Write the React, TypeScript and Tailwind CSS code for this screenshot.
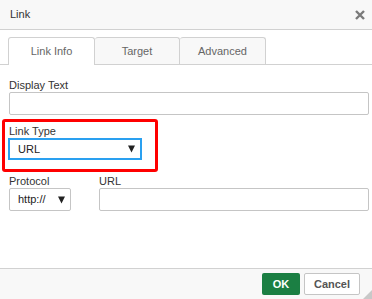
const TABS = [
  { label: "Link Info", w: "w-[87px]", active: true },
  { label: "Target", w: "w-[85px]", active: false },
  { label: "Advanced", w: "w-[86px]", active: false },
];

function Arrow() {
  return (
    <svg width="7" height="8" viewBox="0 0 7 8">
      <path d="M0 0.5 L7 0.5 L3.5 7.5 Z" fill="#222" />
    </svg>
  );
}

export default function App() {
  return (
    <div className="flex h-[299px] w-[372px] flex-col overflow-hidden bg-white text-[11px] text-[#333]" style={{ fontFamily: '"Liberation Sans", Arial, sans-serif' }}>
      <div className="flex h-[30px] shrink-0 items-center justify-between border-b border-[#d1d1d1] bg-[#f8f8f8] pl-[10px] pr-[7px]">
        <span className="text-[11px] text-[#333]">Link</span>
        <svg width="10" height="10" viewBox="0 0 10 10" className="mt-[1px]">
          <path d="M1 1 L9 9 M9 1 L1 9" stroke="#7a7a7a" strokeWidth="2.4" />
        </svg>
      </div>

      <div className="flex border-b border-[#d1d1d1] pl-[8px] pt-[7px]">
        {TABS.map((t) => (
          <div
            key={t.label}
            className={
              t.active
                ? `${t.w} -mb-px flex h-[28px] items-center justify-center rounded-t-[3px] border border-b-0 border-[#d1d1d1] bg-white text-[#666]`
                : `${t.w} flex h-[27px] items-center justify-center rounded-t-[3px] border border-b-0 border-l-0 border-[#d1d1d1] bg-[#f8f8f8] text-[#666]`
            }
          >
            {t.label}
          </div>
        ))}
      </div>

      <div className="flex flex-1 flex-col">
        <div className="mt-[14px] pl-[9px] pr-[3px]">
          <div className="h-[13px] leading-[13px]">Display Text</div>
          <div className="h-[23px] rounded-[2px] border border-[#c5c5c5] bg-white" />
        </div>

        <div className="ml-[2px] mt-[4px] w-[156px] rounded-[3px] border-[3px] border-[#f00] px-[3px] pb-[9px] pt-[3px]">
          <div className="h-[13px] pl-[1px] leading-[13px]">Link Type</div>
          <div className="flex h-[22px] w-[134px] items-center justify-between border-2 border-[#2aa0f0] bg-white pl-[8px] pr-[5px]">
            <span className="text-[11px] text-[#222]">URL</span>
            <Arrow />
          </div>
        </div>

        <div className="mt-[3px] flex pl-[9px] pr-[3px]">
          <div className="w-[90px]">
            <div className="h-[13px] leading-[13px]">Protocol</div>
            <div className="flex h-[23px] w-[62px] items-center justify-between rounded-[2px] border border-[#c5c5c5] bg-white pl-[8px] pr-[5px]">
              <span className="text-[11px] text-[#222]">http://</span>
              <Arrow />
            </div>
          </div>
          <div className="flex-1">
            <div className="h-[13px] leading-[13px]">URL</div>
            <div className="h-[23px] rounded-[2px] border border-[#c5c5c5] bg-white" />
          </div>
        </div>
      </div>

      <div className="relative flex h-[31px] shrink-0 items-center justify-end gap-[4px] border-t border-[#d1d1d1] bg-[#f8f8f8] pr-[12px]">
        <button className="flex h-[22px] w-[38px] items-center justify-center rounded-[2px] bg-[#1b7f43] text-[11px] font-bold text-white">
          OK
        </button>
        <button className="flex h-[22px] w-[56px] items-center justify-center rounded-[2px] border border-[#c5c5c5] bg-white text-[11px] font-bold text-[#555]">
          Cancel
        </button>
        <svg width="9" height="9" viewBox="0 0 9 9" className="absolute bottom-0 right-0">
          <path d="M9 0 L9 9 L0 9 Z" fill="#c8c8c8" />
        </svg>
      </div>
    </div>
  );
}
